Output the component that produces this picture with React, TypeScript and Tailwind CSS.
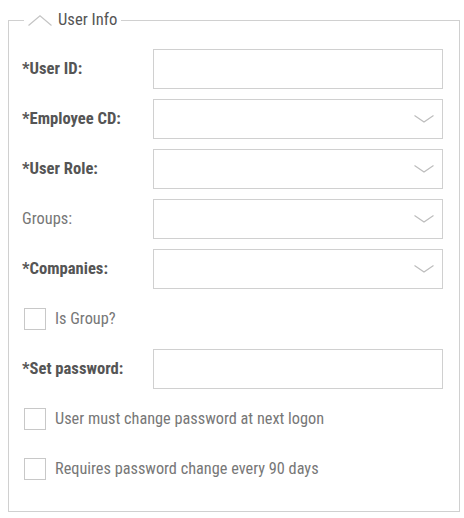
import React from "react";

type Row =
  | { kind: "input"; label: string; required?: boolean }
  | { kind: "select"; label: string; required?: boolean }
  | { kind: "check"; label: string };

const rows: Row[] = [
  { kind: "input", label: "User ID:", required: true },
  { kind: "select", label: "Employee CD:", required: true },
  { kind: "select", label: "User Role:", required: true },
  { kind: "select", label: "Groups:" },
  { kind: "select", label: "Companies:", required: true },
  { kind: "check", label: "Is Group?" },
  { kind: "input", label: "Set password:", required: true },
  { kind: "check", label: "User must change password at next logon" },
  { kind: "check", label: "Requires password change every 90 days" },
];

const ChevronDown = () => (
  <svg width="20" height="8" viewBox="0 0 20 8" fill="none">
    <path d="M0.5 0.5 L10 7 L19.5 0.5" stroke="#bdbdbd" strokeWidth="1.2" />
  </svg>
);

const ChevronUp = () => (
  <svg width="24" height="11" viewBox="0 0 24 11" fill="none">
    <path d="M0.5 10.5 L12 0.8 L23.5 10.5" stroke="#c4c4c4" strokeWidth="1.2" />
  </svg>
);

function FieldLabel({ label, required }: { label: string; required?: boolean }) {
  if (required) {
    return <span className="w-[131px] text-[16.6px] font-bold text-[#555]">*{label}</span>;
  }
  return <span className="w-[131px] text-[16.4px] text-[#777]">{label}</span>;
}

export default function App() {
  return (
    <div className="h-[518px] w-[464px] bg-white pt-[10px] font-['Roboto_Condensed','Roboto',sans-serif]">
      <fieldset className="ml-2 h-[502px] w-[452px] border border-[#d0d0d0] px-[13px] pt-[19px]">
        <legend className="ml-[2px] flex h-5 items-center gap-[6px] px-[4px]">
          <ChevronUp />
          <span className="text-[16.6px] leading-5 text-[#555]">User Info</span>
        </legend>
        <div className="flex flex-col gap-[10px]">
          {rows.map((row) =>
            row.kind === "check" ? (
              <label key={row.label} className="flex h-10 items-center gap-[9px] pl-[2px]">
                <span className="h-[22px] w-[22px] border border-[#c8c8c8] bg-white" />
                <span className="text-[16.3px] text-[#777]">{row.label}</span>
              </label>
            ) : (
              <div key={row.label} className="flex h-10 items-center">
                <FieldLabel label={row.label} required={row.required} />
                <div className="flex h-10 w-[290px] items-center justify-end border border-[#d0d0d0] bg-white pr-[8px]">
                  {row.kind === "select" && <ChevronDown />}
                </div>
              </div>
            )
          )}
        </div>
      </fieldset>
    </div>
  );
}
